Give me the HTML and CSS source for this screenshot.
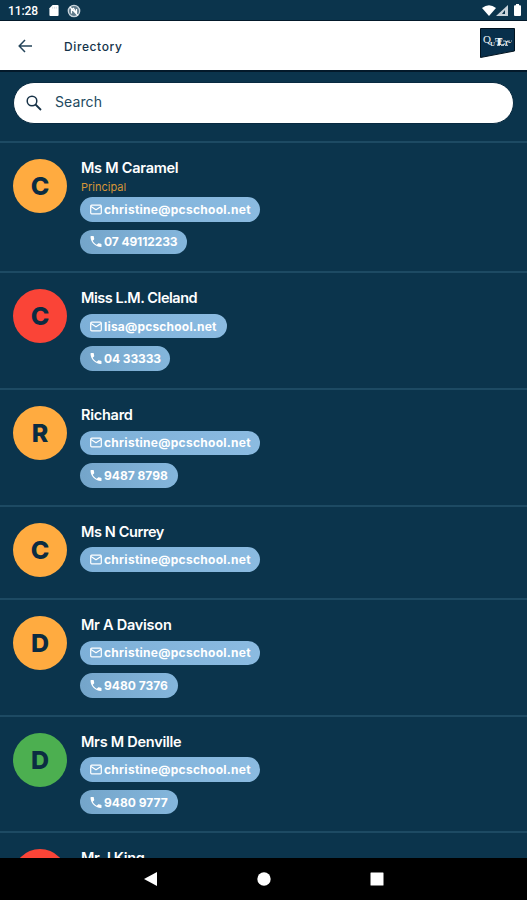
FILE: index.html
```
<!DOCTYPE html>
<html lang="en">
<head>
<meta charset="utf-8">
<title>Directory</title>
<link rel="stylesheet" href="styles.css">
</head>
<body>
<svg class="defs" aria-hidden="true">
  <symbol id="mail" viewBox="0 0 12 10"><rect x=".7" y=".7" width="10.6" height="8.6" rx="1" fill="none" stroke="currentColor" stroke-width="1.2"/><path d="M1 2l5 3.2L11 2" fill="none" stroke="currentColor" stroke-width="1.2"/></symbol>
  <symbol id="phone" viewBox="3 3 18 18"><path fill="currentColor" d="M6.62 10.79c1.44 2.83 3.76 5.14 6.59 6.59l2.2-2.2c.27-.27.67-.36 1.02-.24 1.12.37 2.33.57 3.57.57.55 0 1 .45 1 1V20c0 .55-.45 1-1 1C10.61 21 3 13.39 3 4c0-.55.45-1 1-1h3.5c.55 0 1 .45 1 1 0 1.25.2 2.45.57 3.57.11.35.03.74-.25 1.02l-2.2 2.2z"/></symbol>
</svg>
<div class="phone">
  <div class="status">
    <span class="clock">11:28</span>
    <svg class="sd" viewBox="0 0 10 12"><path fill="#fff" d="M3.5 0H9q1 0 1 1v10q0 1-1 1H1q-1 0-1-1V3.5z"/><path d="M3.5 2v2M5.5 2v2M7.5 2v2" stroke="#c5ced4" stroke-width=".8"/></svg>
    <svg class="sync" viewBox="0 0 14 14"><circle cx="7" cy="7" r="5.7" fill="#607b8b" stroke="#c9d4dc" stroke-width="1.3"/><path d="M4.5 9.5v-4l2-1.2 3 5V5M3 3l8 8.5" fill="none" stroke="#fff" stroke-width="1.2"/></svg>
    <svg class="signals" viewBox="0 0 40 14"><path fill="#fff" d="M0 4q7-5.500 14 0L7 12z"/><path fill="#c8d2d9" d="M26 1v11H14z"/><path fill="#0b344c" d="M23 6v4h-3z"/><path fill="#fff" d="M34 0h3v1.300h1q1 0 1 1V11q0 1-1 1h-5q-1 0-1-1V2.300q0-1 1-1h1z"/></svg>
  </div>
  <header class="bar">
    <svg class="back" viewBox="0 0 14 14"><path d="M7 1L1.200 7 7 13M1.200 7H14" fill="none" stroke="#24445a" stroke-width="1.5"/></svg>
    <h1>Directory</h1>
    <svg class="logo" viewBox="0 0 35 31"><path fill="#082f4b" stroke="#02131f" d="M.5.5h34V23L.5 29.500z"/><text fill="#eef3f6" font-family="Liberation Serif, serif" font-weight="bold"><tspan x="3" y="15" font-size="11" font-weight="normal">Q</tspan><tspan x="10" y="18" font-size="7">U</tspan><tspan x="15" y="17" font-size="11" textLength="10">TL</tspan><tspan x="25" y="17" font-size="8">r-</tspan></text><path d="M15 13h17M17 17.500h12" stroke="#dce5eb" stroke-width=".8" stroke-dasharray="3 1"/></svg>
  </header>
  <main>
    <div class="search">
      <svg viewBox="0 0 16 16"><circle cx="6" cy="6" r="4.800" fill="none" stroke="#173247" stroke-width="1.500"/><path d="M9.500 9.500l5.500 5.500" stroke="#173247" stroke-width="1.800"/></svg>
      <span>Search</span>
    </div>
    <section class="row tall"><div class="avatar">C</div><div class="info"><h2 class="wide">Ms M Caramel</h2><p>Principal</p><a class="chip email"><svg><use href="#mail"/></svg><span>christine@pcschool.net</span></a><a class="chip tel t1"><svg><use href="#phone"/></svg><span>07 49112233</span></a></div></section>
    <section class="row"><div class="avatar red">C</div><div class="info"><h2 class="narrow">Miss L.M. Cleland</h2><a class="chip email lisa"><svg><use href="#mail"/></svg><span>lisa@pcschool.net</span></a><a class="chip tel t2"><svg><use href="#phone"/></svg><span>04 33333</span></a></div></section>
    <section class="row"><div class="avatar">R</div><div class="info"><h2 class="wide">Richard</h2><a class="chip email"><svg><use href="#mail"/></svg><span>christine@pcschool.net</span></a><a class="chip tel"><svg><use href="#phone"/></svg><span>9487 8798</span></a></div></section>
    <section class="row short"><div class="avatar">C</div><div class="info"><h2>Ms N Currey</h2><a class="chip email"><svg><use href="#mail"/></svg><span>christine@pcschool.net</span></a></div></section>
    <section class="row"><div class="avatar">D</div><div class="info"><h2 class="wide">Mr A Davison</h2><a class="chip email"><svg><use href="#mail"/></svg><span>christine@pcschool.net</span></a><a class="chip tel"><svg><use href="#phone"/></svg><span>9480 7376</span></a></div></section>
    <section class="row"><div class="avatar green">D</div><div class="info"><h2 class="wide">Mrs M Denville</h2><a class="chip email"><svg><use href="#mail"/></svg><span>christine@pcschool.net</span></a><a class="chip tel"><svg><use href="#phone"/></svg><span>9480 9777</span></a></div></section>
    <section class="row"><div class="avatar red"></div><div class="info"><h2>Mr J King</h2></div></section>
  </main>
  <nav>
    <svg viewBox="0 0 14 14"><path fill="#fff" d="M13 0v14L0 7z"/></svg>
    <svg viewBox="0 0 14 14"><circle cx="7" cy="7" r="6.700" fill="#fff"/></svg>
    <svg viewBox="0 0 14 14"><rect x=".5" y=".5" width="13" height="13" rx=".5" fill="#fff"/></svg>
  </nav>
</div>
</body>
</html>
```
FILE: styles.css
```
* { box-sizing: border-box; }
body { margin: 0; background: #0b344c; font-family: Inter, sans-serif; color: #fff; }
h1, h2, p { margin: 0; }
.defs { position: absolute; width: 0; height: 0; }
.phone { width: 527px; height: 900px; display: flex; flex-direction: column; overflow: hidden; }
.status { height: 21px; flex: none; display: flex; align-items: center; padding: 1px 5px 0 8px; border-bottom: 1px solid #03192a; }
.clock { font: 500 12px/20px Roboto, sans-serif; width: 41px; letter-spacing: -.1px; }
.sd { width: 10px; height: 11px; }
.sync { width: 14px; height: 14px; margin-left: 8px; }
.signals { width: 40px; height: 14px; margin-left: auto; }
.bar { height: 51px; flex: none; background: #fff; display: flex; align-items: center; padding: 0 12px 0 18px; border-bottom: 2px solid #03192a; }
.back { width: 14px; height: 14px; }
h1 { margin-left: 32px; font-size: 12px; line-height: 18px; font-weight: 500; color: #14334a; letter-spacing: .6px; margin-top: 3px; }
.logo { width: 35px; height: 31px; margin-left: auto; margin-top: -5px; }
main { height: 786px; flex: none; overflow: hidden; }
.search { height: 42px; margin: 10px 13px 17px; background: #fff; border: 1px solid #082a40; border-radius: 21px; display: flex; align-items: center; padding-left: 12px; color: #224960; font-size: 14px; letter-spacing: .1px; }
.search svg { width: 16px; height: 16px; margin-right: 13px; }
.search span { margin-top: -3px; }
.row { height: 116.700px; border-top: 2px solid #1d4a63; padding: 16px 13px 0; display: flex; align-items: flex-start; }
.tall { height: 130.300px; }
.short { height: 93.300px; }
.avatar { width: 54px; height: 54px; border-radius: 50%; background: #ffab40; color: #0b2c42; display: flex; align-items: center; justify-content: center; font-size: 25px; font-weight: 800; flex: none; }
.red { background: #fa4437; }
.green { background: #4caf50; }
.info { display: flex; flex-direction: column; align-items: flex-start; margin-left: 13px; }
h2 { font-size: 14.500px; line-height: 18px; height: 24.600px; font-weight: 600; white-space: nowrap; letter-spacing: -.4px; padding-left: 1px; }
.wide { letter-spacing: -.25px; }
.narrow { letter-spacing: -.46px; }
p { height: 14px; margin-top: -1.600px; margin-bottom: 1px; line-height: 11px; font-size: 11px; color: #d59437; padding-left: 1px; }
.chip { height: 24.500px; width: 98px; border-radius: 13px; background: #85b6dd; display: flex; align-items: center; padding-left: 10px; margin-bottom: 8px; font-size: 12px; font-weight: 700; white-space: nowrap; }
.chip svg { width: 12px; height: 11px; margin-right: 2px; flex: none; }
.email { width: 180px; background: linear-gradient(90deg, #7db0d8, #8bbbe1); letter-spacing: .28px; }
.lisa { width: 147px; letter-spacing: .2px; }
.tel { background: linear-gradient(90deg, #74a5ca, #84b6dc); }
.t1 { width: 107px; letter-spacing: -.1px; }
.t2 { width: 90px; letter-spacing: -.1px; }
nav { flex: 1; background: #000; display: flex; justify-content: center; align-items: center; gap: 99px; }
nav svg { width: 14px; height: 14px; }
```
